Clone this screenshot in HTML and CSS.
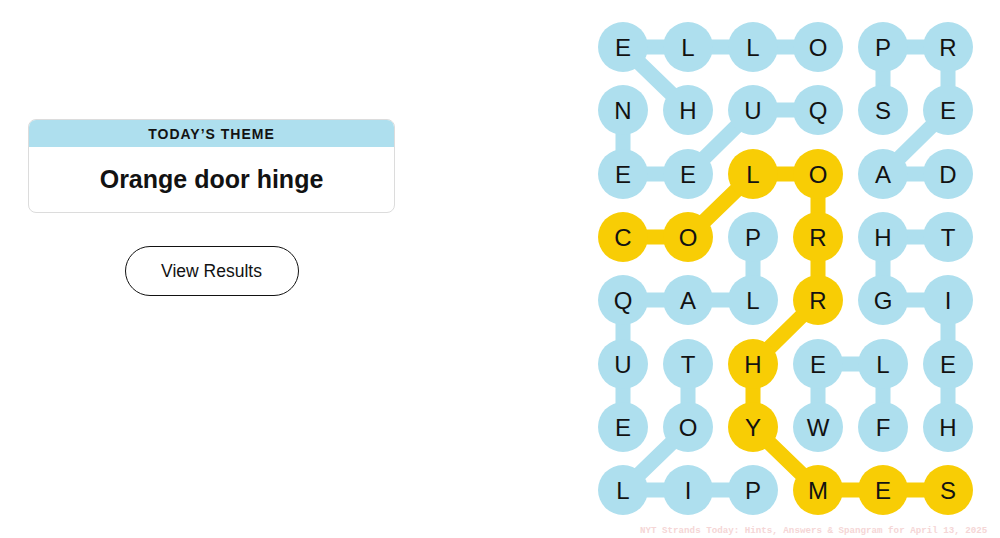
FILE: index.html
```html
<!DOCTYPE html>
<html lang="en">
<head>
<meta charset="utf-8">
<title>Strands</title>
<link rel="stylesheet" href="styles.css">
</head>
<body>
<div class="page">
  <section class="left">
    <div class="card">
      <div class="card-head">TODAY’S THEME</div>
      <div class="card-body">Orange door hinge</div>
    </div>
    <div class="actions">
      <button class="results-btn">View Results</button>
    </div>
  </section>
  <section class="board">
    <svg class="grid" width="390" height="510" viewBox="0 0 390 510">
      <g class="link blue">
        <line x1="33" y1="33" x2="228" y2="33"/>
        <line x1="293" y1="33" x2="358" y2="33"/>
        <line x1="33" y1="33" x2="98" y2="96"/>
        <line x1="293" y1="33" x2="293" y2="96"/>
        <line x1="358" y1="33" x2="358" y2="96"/>
        <line x1="163" y1="96" x2="228" y2="96"/>
        <line x1="33" y1="96" x2="33" y2="160"/>
        <line x1="163" y1="96" x2="98" y2="160"/>
        <line x1="358" y1="96" x2="293" y2="160"/>
        <line x1="33" y1="160" x2="98" y2="160"/>
        <line x1="293" y1="160" x2="358" y2="160"/>
        <line x1="293" y1="223" x2="358" y2="223"/>
        <line x1="163" y1="223" x2="163" y2="286"/>
        <line x1="293" y1="223" x2="293" y2="286"/>
        <line x1="33" y1="286" x2="163" y2="286"/>
        <line x1="293" y1="286" x2="358" y2="286"/>
        <line x1="33" y1="286" x2="33" y2="413"/>
        <line x1="358" y1="286" x2="358" y2="413"/>
        <line x1="228" y1="350" x2="293" y2="350"/>
        <line x1="98" y1="350" x2="98" y2="413"/>
        <line x1="228" y1="350" x2="228" y2="413"/>
        <line x1="293" y1="350" x2="293" y2="413"/>
        <line x1="98" y1="413" x2="33" y2="476"/>
        <line x1="33" y1="476" x2="163" y2="476"/>
      </g>
      <g class="link gold">
        <line x1="33" y1="223" x2="98" y2="223"/>
        <line x1="98" y1="223" x2="163" y2="160"/>
        <line x1="163" y1="160" x2="228" y2="160"/>
        <line x1="228" y1="160" x2="228" y2="286"/>
        <line x1="228" y1="286" x2="163" y2="350"/>
        <line x1="163" y1="350" x2="163" y2="413"/>
        <line x1="163" y1="413" x2="228" y2="476"/>
        <line x1="228" y1="476" x2="358" y2="476"/>
      </g>
      <g class="cells" id="cells"></g>
    </svg>
  </section>
</div>
<div class="watermark">NYT Strands Today: Hints, Answers &amp; Spangram for April 13, 2025</div>
<script src="script.js"></script>
</body>
</html>
```

FILE: script.js
```js
(function () {
  var rows = ["ELLOPR", "NHUQSE", "EELOAD", "COPRHT", "QALRGI", "UTHELE", "EOYWFH", "LIPMES"];
  var gold = {"3,0":1, "3,1":1, "2,2":1, "2,3":1, "3,3":1, "4,3":1, "5,2":1, "6,2":1, "7,3":1, "7,4":1, "7,5":1};
  var ys = [33, 96, 160, 223, 286, 350, 413, 476];
  var ns = "http://www.w3.org/2000/svg";
  var g = document.getElementById("cells");
  rows.forEach(function (row, r) {
    row.split("").forEach(function (ch, c) {
      var x = 33 + 65 * c, y = ys[r];
      var circ = document.createElementNS(ns, "circle");
      circ.setAttribute("cx", x);
      circ.setAttribute("cy", y);
      circ.setAttribute("r", 25);
      circ.setAttribute("class", gold[r + "," + c] ? "cell gold" : "cell blue");
      g.appendChild(circ);
      var t = document.createElementNS(ns, "text");
      t.setAttribute("x", x);
      t.setAttribute("y", y + 8.5);
      t.setAttribute("class", "letter");
      t.textContent = ch;
      g.appendChild(t);
    });
  });
})();
```

FILE: styles.css
```css
* { box-sizing: border-box; }
html, body {
  margin: 0;
  padding: 0;
  width: 1000px;
  height: 538px;
  overflow: hidden;
  background: #ffffff;
  font-family: "Liberation Sans", Arial, sans-serif;
  color: #121212;
}
.page {
  display: flex;
  width: 1000px;
  height: 538px;
}
.left {
  width: 590px;
  padding: 119px 0 0 28px;
}
.card {
  width: 367px;
  border: 1px solid #dcdcdc;
  border-radius: 8px;
  overflow: hidden;
}
.card-head {
  height: 27px;
  line-height: 28px;
  background: #aedfee;
  text-align: center;
  font-weight: 700;
  font-size: 14px;
  letter-spacing: 1px;
  color: #121212;
}
.card-body {
  height: 65px;
  display: flex;
  align-items: center;
  justify-content: center;
  font-weight: 700;
  font-size: 25px;
  color: #121212;
}
.actions {
  width: 367px;
  display: flex;
  justify-content: center;
  margin-top: 33px;
}
.results-btn {
  width: 174px;
  height: 50px;
  border: 1px solid #121212;
  border-radius: 25px;
  background: #ffffff;
  font-family: "Liberation Sans", Arial, sans-serif;
  font-size: 17.5px;
  color: #121212;
  padding: 0;
}
.board {
  padding-top: 14px;
}
.grid { display: block; }
.link line {
  stroke-width: 15;
  stroke-linecap: round;
}
.link.blue line { stroke: #aedfee; }
.link.gold line { stroke: #f8cd05; }
.cell.blue { fill: #aedfee; }
.cell.gold { fill: #f8cd05; }
.letter {
  font-family: "Liberation Sans", Arial, sans-serif;
  font-size: 24px;
  fill: #121212;
  text-anchor: middle;
}
.watermark {
  position: absolute;
  left: 640px;
  top: 525px;
  white-space: nowrap;
  font-family: "Liberation Mono", monospace;
  font-weight: 700;
  font-size: 9.2px;
  color: #f5d6d6;
}
```
